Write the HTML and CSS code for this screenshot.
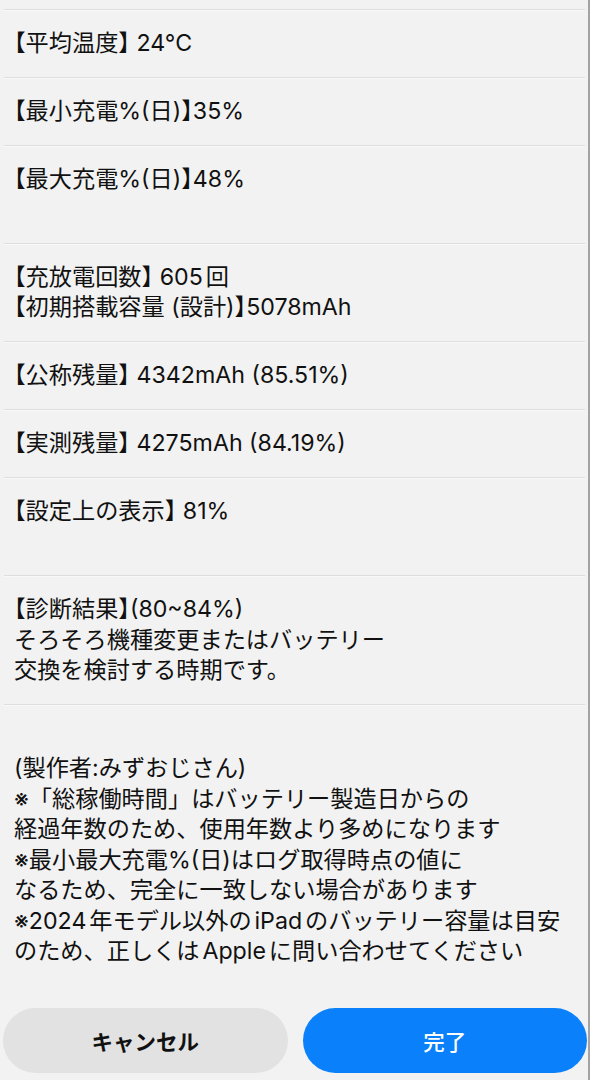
FILE: index.html
```html
<!DOCTYPE html>
<html lang="ja">
<head>
    <meta charset="UTF-8">
    <meta name="viewport" content="width=device-width, initial-scale=1.0">
    <link rel="stylesheet" href="styles.css">
</head>
<body>
    <div class="screen">
        <div class="battery-list">
            <div class="top-cut"></div>

            <div class="battery-row"><span class="br-open">【</span>平均温度<span class="br-close">】</span> 24°C</div>
            <div class="battery-row"><span class="br-open">【</span>最小充電%(日)<span class="br-close">】</span>35%</div>
            <div class="battery-row"><span class="br-open">【</span>最大充電%(日)<span class="br-close">】</span>48%<br>&nbsp;</div>
            <div class="battery-row">
                <span class="br-open">【</span>充放電回数<span class="br-close">】</span> 605回<br>
                <span class="br-open">【</span>初期搭載容量 (設計)<span class="br-close">】</span>5078mAh
            </div>
            <div class="battery-row"><span class="br-open">【</span>公称残量<span class="br-close">】</span> 4342mAh (85.51%)</div>
            <div class="battery-row"><span class="br-open">【</span>実測残量<span class="br-close">】</span> 4275mAh (84.19%)</div>
            <div class="battery-row"><span class="br-open">【</span>設定上の表示<span class="br-close">】</span> 81%<br>&nbsp;</div>
            <div class="battery-row">
                <span class="br-open">【</span>診断結果<span class="br-close">】</span>(80~84%)<br>
                そろそろ機種変更またはバッテリー<br>
                交換を検討する時期です。
            </div>
            <div class="battery-row">
                &nbsp;<br>
                (製作者:みずおじさん)<br>
                ※「総稼働時間」はバッテリー製造日からの<br>
                経過年数のため、使用年数より多めになります<br>
                ※最小最大充電%(日)はログ取得時点の値に<br>
                なるため、完全に一致しない場合があります<br>
                ※2024年モデル以外のiPadのバッテリー容量は目安<br>
                のため、正しくはAppleに問い合わせてください
            </div>
        </div>

        <div class="actions">
            <button class="action-button cancel-button">キャンセル</button>
            <button class="action-button done-button">完了</button>
        </div>
    </div>
</body>
</html>
```

FILE: styles.css
```css
body {
    margin: 0;
    background-color: #f2f2f2;
    font-family: Inter, "Noto Sans CJK JP", sans-serif;
    color: #111;
}

.screen {
    width: 588px;
    height: 1080px;
    border-right: 2px solid #a3a3a3;
    display: flex;
    flex-direction: column;
    overflow: hidden;
}

.top-cut {
    height: 9px;
}

.battery-list {
    font-size: 23.2px;
    line-height: 30.5px;
    text-autospace: normal;
    text-spacing-trim: space-all;
}

.battery-row {
    margin-left: 4px;
    margin-right: 3px;
    padding: 18.15px 8px 18.15px 10px;
    border-top: 1px solid #dedede;
    box-shadow: inset 0 1px 0 #f9f9f9;
    white-space: nowrap;
}

/* half width brackets like iOS */
.br-open {
    margin-left: -0.5em;
}

.br-close {
    font-feature-settings: "halt";
}

/* bottom buttons */
.actions {
    margin-top: auto;
    display: flex;
    gap: 15px;
    padding: 0 1px 7px 3px;
}

.action-button {
    flex: 1;
    height: 65px;
    border: none;
    border-radius: 33px;
    font-family: Inter, "Noto Sans CJK JP", sans-serif;
    font-size: 21.5px;
    cursor: pointer;
}

.cancel-button {
    background-color: #e2e2e2;
    color: #111;
    font-weight: 700;
}

.done-button {
    background-color: #0a80fb;
    color: #fff;
    font-weight: 500;
}
```
